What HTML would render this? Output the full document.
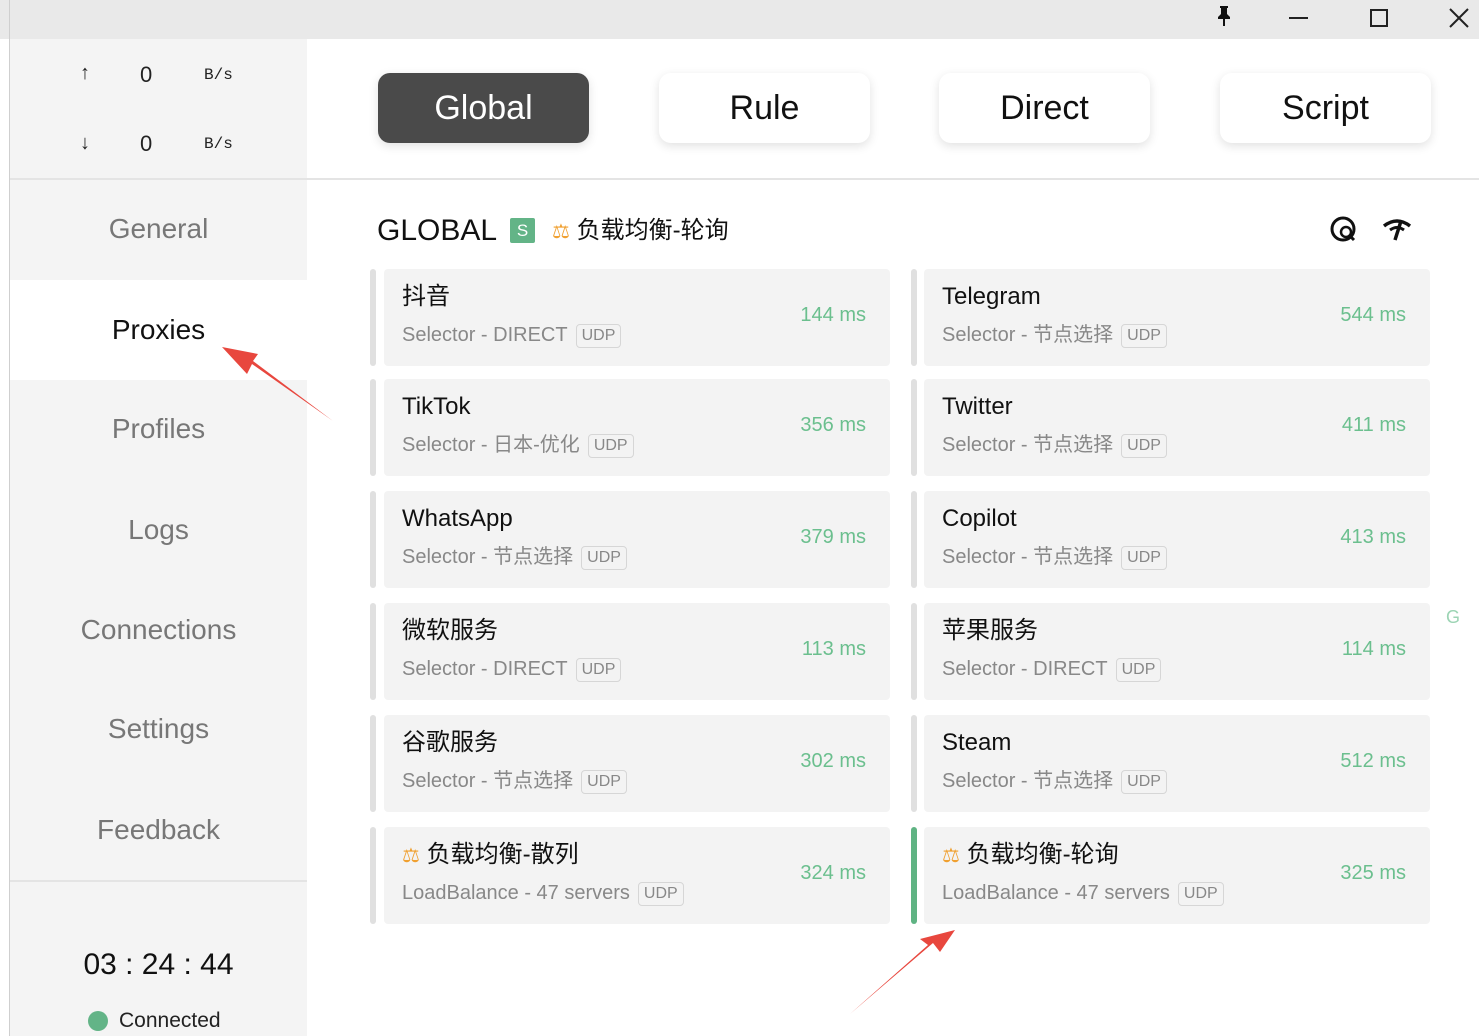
<!DOCTYPE html>
<html><head><meta charset="utf-8"><style>
*{box-sizing:border-box;margin:0;padding:0}
body{width:1479px;height:1036px;overflow:hidden;background:#fff;font-family:"Liberation Sans","Noto Sans CJK SC",sans-serif;position:relative}
.abs{position:absolute}
.title{left:0;top:0;width:1479px;height:39px;background:#e9e9e9}
.lb{left:9px;top:0;width:1px;height:1036px;background:#cfcfcf}
.side{left:10px;top:39px;width:297px;height:997px;background:#f4f4f4}
.nav{position:absolute;left:10px;width:297px;text-align:center;font-size:28px;color:#777;line-height:34px}
.btn{position:absolute;top:73px;width:211px;height:70px;border-radius:12px;background:#fff;box-shadow:0 3px 10px rgba(0,0,0,.12);font-size:34px;text-align:center;line-height:70px;color:#111}
.card{position:absolute;width:506px;height:97px;background:#f3f3f3;border-radius:4px}
.bar{position:absolute;width:6px;height:97px;background:#e0e0e0;border-radius:3px}
.nm{position:absolute;left:18px;top:13px;font-size:24px;color:#111;line-height:30px;height:30px;white-space:nowrap}
.sub{position:absolute;left:18px;top:52px;font-size:20px;color:#888;white-space:nowrap;line-height:28px;height:28px}
.udp{display:inline-block;border:1px solid #d6d6d6;border-radius:4px;font-size:16px;line-height:20px;padding:1px 5px;margin-left:8px;color:#888;vertical-align:1px}
.ms{position:absolute;right:24px;top:32px;font-size:20px;color:#6bbf8e;line-height:28px}
.sc{color:#f0a030;font-size:20px;line-height:30px}
</style></head><body>
<div class="abs title"></div>
<div class="abs lb"></div>
<div class="abs side"></div>
<div class="abs" style="left:10px;top:280px;width:297px;height:100px;background:#fff"></div>
<div class="abs" style="left:10px;top:179px;width:297px;height:101px;background:#f4f4f4;border-bottom-right-radius:18px"></div>
<div class="abs" style="left:10px;top:380px;width:297px;height:40px;background:#f4f4f4;border-top-right-radius:18px"></div>
<div class="abs" style="left:10px;top:178px;width:1469px;height:2px;background:#e4e4e4"></div>
<div class="abs" style="left:10px;top:880px;width:297px;height:2px;background:#e4e4e4"></div>
<div class="abs" style="left:80px;top:62px;font-size:20px;color:#222">↑</div>
<div class="abs" style="left:140px;top:62px;font-size:22px;color:#222">0</div>
<div class="abs" style="left:204px;top:66px;font-size:16px;color:#222;font-family:'Liberation Mono',monospace">B/s</div>
<div class="abs" style="left:80px;top:132px;font-size:20px;color:#222">↓</div>
<div class="abs" style="left:140px;top:131px;font-size:22px;color:#222">0</div>
<div class="abs" style="left:204px;top:135px;font-size:16px;color:#222;font-family:'Liberation Mono',monospace">B/s</div>
<div class="nav" style="top:212px">General</div>
<div class="nav" style="top:313px;color:#111">Proxies</div>
<div class="nav" style="top:412px">Profiles</div>
<div class="nav" style="top:513px">Logs</div>
<div class="nav" style="top:613px">Connections</div>
<div class="nav" style="top:712px">Settings</div>
<div class="nav" style="top:813px">Feedback</div>
<div class="nav" style="top:948px;font-size:30px;color:#111">03 : 24 : 44</div>
<div class="abs" style="left:88px;top:1011px;width:20px;height:20px;border-radius:50%;background:#63b487"></div>
<div class="abs" style="left:119px;top:1009px;font-size:21px;color:#222">Connected</div>
<svg class="abs" style="left:1214px;top:5px" width="20" height="22" viewBox="0 0 20 22"><path d="M6 1h8v2h-1v6l3 3v2h-5v7h-2v-7H4v-2l3-3V3H6z" fill="#111"/></svg>
<div class="abs" style="left:1289px;top:17px;width:19px;height:2px;background:#222"></div>
<div class="abs" style="left:1370px;top:9px;width:18px;height:18px;border:2px solid #222"></div>
<svg class="abs" style="left:1449px;top:8px" width="20" height="20"><path d="M1 1L19 19M19 1L1 19" stroke="#222" stroke-width="2"/></svg>
<div class="btn" style="left:378px;background:#4a4a4a;color:#fff">Global</div>
<div class="btn" style="left:659px">Rule</div>
<div class="btn" style="left:939px">Direct</div>
<div class="btn" style="left:1220px">Script</div>
<div class="abs" style="left:377px;top:214px;font-size:30px;color:#111;line-height:34px">GLOBAL</div>
<div class="abs" style="left:510px;top:218px;width:25px;height:25px;background:#63b487;color:#fff;font-size:17px;text-align:center;line-height:25px;border-radius:2px">S</div>
<div class="abs" style="left:552px;top:215px;font-size:24px;color:#111;line-height:32px"><span class="sc">⚖</span> 负载均衡-轮询</div>
<svg class="abs" style="left:1330px;top:216px" width="28" height="28" viewBox="0 0 28 28"><circle cx="13" cy="13" r="11" fill="none" stroke="#111" stroke-width="3"/><circle cx="16" cy="16" r="5" fill="#fff" stroke="#111" stroke-width="2.5"/><path d="M19 19l5 5" stroke="#111" stroke-width="3"/></svg>
<svg class="abs" style="left:1382px;top:218px" width="30" height="24" viewBox="0 0 30 24"><path d="M2 8Q15 -2 28 8" fill="none" stroke="#111" stroke-width="3.5"/><path d="M8 12Q15 7 22 12" fill="none" stroke="#111" stroke-width="3"/><path d="M19 3L13 22" stroke="#111" stroke-width="3.5"/></svg>
<div class="abs" style="left:1446px;top:607px;font-size:18px;color:#9cd4b4">G</div>

<div class="bar" style="left:370px;top:269px"></div><div class="card" style="left:384px;top:269px"><div class="nm">抖音</div><div class="sub">Selector - DIRECT<span class="udp">UDP</span></div><div class="ms">144 ms</div></div>
<div class="bar" style="left:911px;top:269px"></div><div class="card" style="left:924px;top:269px"><div class="nm">Telegram</div><div class="sub">Selector - 节点选择<span class="udp">UDP</span></div><div class="ms">544 ms</div></div>
<div class="bar" style="left:370px;top:379px"></div><div class="card" style="left:384px;top:379px"><div class="nm">TikTok</div><div class="sub">Selector - 日本-优化<span class="udp">UDP</span></div><div class="ms">356 ms</div></div>
<div class="bar" style="left:911px;top:379px"></div><div class="card" style="left:924px;top:379px"><div class="nm">Twitter</div><div class="sub">Selector - 节点选择<span class="udp">UDP</span></div><div class="ms">411 ms</div></div>
<div class="bar" style="left:370px;top:491px"></div><div class="card" style="left:384px;top:491px"><div class="nm">WhatsApp</div><div class="sub">Selector - 节点选择<span class="udp">UDP</span></div><div class="ms">379 ms</div></div>
<div class="bar" style="left:911px;top:491px"></div><div class="card" style="left:924px;top:491px"><div class="nm">Copilot</div><div class="sub">Selector - 节点选择<span class="udp">UDP</span></div><div class="ms">413 ms</div></div>
<div class="bar" style="left:370px;top:603px"></div><div class="card" style="left:384px;top:603px"><div class="nm">微软服务</div><div class="sub">Selector - DIRECT<span class="udp">UDP</span></div><div class="ms">113 ms</div></div>
<div class="bar" style="left:911px;top:603px"></div><div class="card" style="left:924px;top:603px"><div class="nm">苹果服务</div><div class="sub">Selector - DIRECT<span class="udp">UDP</span></div><div class="ms">114 ms</div></div>
<div class="bar" style="left:370px;top:715px"></div><div class="card" style="left:384px;top:715px"><div class="nm">谷歌服务</div><div class="sub">Selector - 节点选择<span class="udp">UDP</span></div><div class="ms">302 ms</div></div>
<div class="bar" style="left:911px;top:715px"></div><div class="card" style="left:924px;top:715px"><div class="nm">Steam</div><div class="sub">Selector - 节点选择<span class="udp">UDP</span></div><div class="ms">512 ms</div></div>
<div class="bar" style="left:370px;top:827px"></div><div class="card" style="left:384px;top:827px"><div class="nm"><span class="sc">⚖</span> 负载均衡-散列</div><div class="sub">LoadBalance - 47 servers<span class="udp">UDP</span></div><div class="ms">324 ms</div></div>
<div class="bar" style="left:911px;top:827px;background:#5fb383"></div><div class="card" style="left:924px;top:827px"><div class="nm"><span class="sc">⚖</span> 负载均衡-轮询</div><div class="sub">LoadBalance - 47 servers<span class="udp">UDP</span></div><div class="ms">325 ms</div></div>

<svg class="abs" style="left:0;top:0" width="1479" height="1036"><g fill="#e8473e">
<polygon points="333,421 252,364 247,374 222,347 258,354 253,361"/>
<polygon points="850,1014 933,943 940,952 955,930 920,939 928,945"/>
</g></svg>
</body></html>
